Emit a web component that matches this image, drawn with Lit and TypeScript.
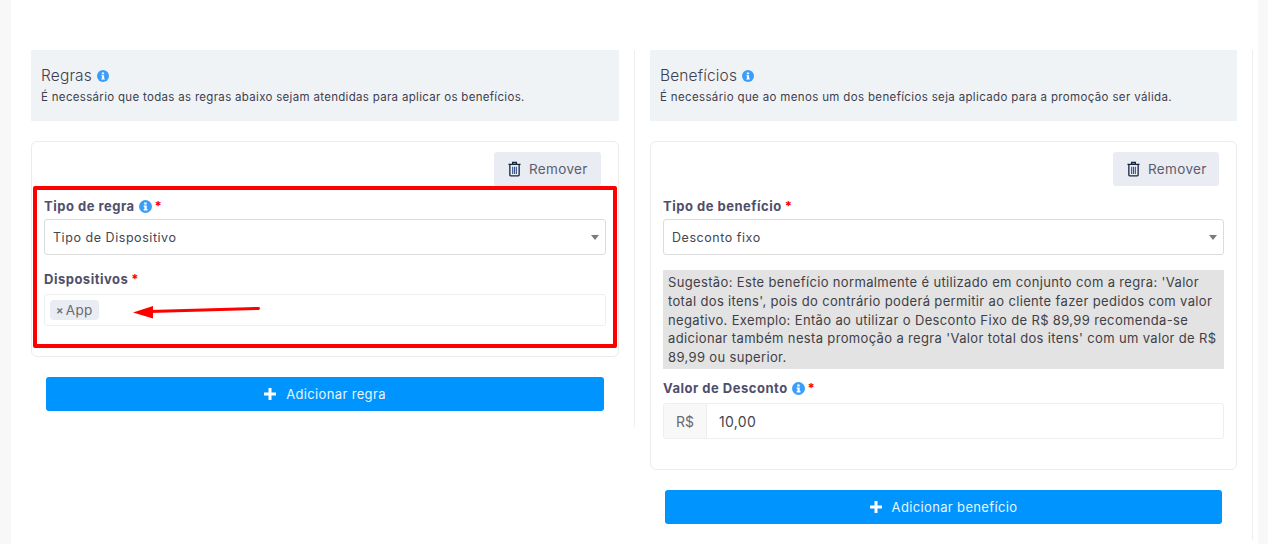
import { LitElement, html, css, svg } from 'lit';
import { customElement } from 'lit/decorators.js';

const infoIcon = html`<svg class="info" viewBox="0 0 14 14">
  <circle cx="7" cy="7" r="7" fill="#3b9dfa"></circle>
  <path d="M5.6 2.8h2.7v2.1H5.6zM5 6h3.3v3.8h.9V11.2H5V9.8h.9V7.4H5z" fill="#fff"></path>
</svg>`;

const trashIcon = html`<svg class="trash" viewBox="0 0 14 16">
  <path d="M.5 3h13M5 3V1h4V3" fill="none" stroke="#16233f" stroke-width="1.4"></path>
  <path d="M2 3.5v11c0 .5.3.8.8.8h8.4c.5 0 .8-.3.8-.8v-11" fill="none" stroke="#16233f" stroke-width="1.4"></path>
  <path d="M5 5.5v7.8M7 5.5v7.8M9 5.5v7.8" stroke="#35568a" stroke-width="1.2"></path>
</svg>`;

const plusIcon = html`<svg class="plus" viewBox="0 0 12 12">
  <path d="M4.5 0h3v4.5H12v3H7.5V12h-3V7.5H0v-3h4.5z" fill="#fff"></path>
</svg>`;

const arrow = svg`<path d="M258.5 308.5L150 311.5" stroke="#ff0000" stroke-width="3" stroke-linecap="round"></path>
  <path d="M133 312.5L153 306V318.5z" fill="#ff0000"></path>`;

@customElement('app-root')
export class AppRoot extends LitElement {
  static styles = css`
    :host {
      display: block;
      position: relative;
      width: 1268px;
      height: 544px;
      overflow: hidden;
      background: #f8f8f8;
      font-family: 'Inter', 'Liberation Sans', sans-serif;
      color: #3e3e4e;
    }

    .page {
      width: 1247px;
      height: 544px;
      margin-left: 11px;
      padding: 50px 5px 0;
      box-sizing: border-box;
      background: #fff;
      display: grid;
      grid-template-columns: 619px 618px;
      align-items: start;
    }

    .col {
      border-right: 1px solid #eeeeee;
      padding: 0 15px 16px;
    }

    .head {
      background: #f0f3f6;
      height: 71px;
      box-sizing: border-box;
      padding: 16px 10px 0;
      margin-bottom: 20px;
    }

    .title {
      display: flex;
      align-items: center;
      gap: 5px;
      font-size: 15.5px;
      line-height: 19px;
      font-weight: 300;
      letter-spacing: 0.15px;
    }

    .title .info { width: 12px; height: 12px; }

    .sub {
      font-size: 11.5px;
      line-height: 16px;
      margin-top: 4px;
      letter-spacing: 0.31px;
      white-space: nowrap;
    }

    .right .sub { letter-spacing: 0.35px; }

    .info { width: 13px; height: 13px; flex: none; }

    .card {
      border: 1px solid #ececec;
      border-radius: 6px;
      padding: 10px 12px 0;
      margin-bottom: 20px;
      box-sizing: border-box;
    }

    .left .card { height: 216px; }
    .right .card { height: 329px; }

    .tools { display: flex; justify-content: flex-end; margin-right: 5px; }

    .remove {
      display: flex;
      align-items: center;
      gap: 8px;
      width: 107px;
      height: 34px;
      box-sizing: border-box;
      padding-left: 14px;
      border: 0;
      border-radius: 3px;
      background: #e9ecf3;
      color: #5d5d6e;
      font: inherit;
      font-size: 13.5px;
      letter-spacing: 0.35px;
    }

    .right .remove { width: 106px; }

    .trash { width: 13px; height: 16px; flex: none; }

    .label {
      display: flex;
      align-items: center;
      gap: 4px;
      font-size: 13px;
      line-height: 16px;
      font-weight: 700;
      color: #4f4f6b;
      letter-spacing: 0.5px;
      margin-top: 12px;
      margin-bottom: 5px;
    }

    .label.next { margin-top: 16px; margin-bottom: 7px; }
    .label.value { margin-top: 11px; margin-bottom: 7px; }

    .req { color: #ff0000; margin-left: -1px; }

    .select {
      height: 36px;
      box-sizing: border-box;
      border: 1px solid #dcdcdc;
      border-radius: 3px;
      display: flex;
      align-items: center;
      justify-content: space-between;
      padding: 0 6px 0 8px;
      font-size: 12.5px;
      letter-spacing: 0.55px;
      color: #45454f;
    }

    .caret {
      width: 0;
      height: 0;
      border-left: 4.5px solid transparent;
      border-right: 4.5px solid transparent;
      border-top: 5px solid #7a7a7a;
      margin-top: 1px;
    }

    .multi {
      height: 32px;
      box-sizing: border-box;
      border: 1px solid #eeeeee;
      border-radius: 3px;
      display: flex;
      align-items: center;
      padding-left: 5px;
    }

    .chip {
      display: flex;
      align-items: center;
      gap: 2px;
      height: 20px;
      padding: 0 6px;
      border-radius: 4px;
      background: #e9ecf3;
      color: #6a6a72;
      font-size: 13.5px;
      letter-spacing: 0.3px;
    }

    .chip i { font-style: normal; font-size: 11px; font-weight: 700; color: #777; }

    .hint {
      margin-top: 15px;
      background: #e3e3e3;
      padding: 3px 5px;
      height: 99px;
      box-sizing: border-box;
      font-size: 13px;
      line-height: 18.8px;
      letter-spacing: 0.35px;
      white-space: nowrap;
      color: #3f3f46;
    }

    .money {
      height: 36px;
      box-sizing: border-box;
      border: 1px solid #eeeeee;
      border-radius: 3px;
      display: flex;
      align-items: stretch;
      font-size: 14px;
    }

    .money span {
      width: 42px;
      background: #f8f8f8;
      border-right: 1px solid #eeeeee;
      color: #6a6a72;
      display: flex;
      align-items: center;
      justify-content: center;
    }

    .money div { display: flex; align-items: center; padding-left: 12px; color: #45454f; letter-spacing: 0.3px; }

    .add {
      display: flex;
      align-items: center;
      justify-content: center;
      gap: 10px;
      width: calc(100% - 30px);
      height: 34px;
      margin: 0 15px;
      border: 0;
      border-radius: 3px;
      background: #0094ff;
      color: #e8f5ff;
      font: inherit;
      font-size: 13px;
      letter-spacing: 0.35px;
      box-sizing: border-box;
    }

    .plus { width: 12px; height: 12px; }

    .mark {
      position: absolute;
      left: 33px;
      top: 186px;
      width: 584px;
      height: 162px;
      box-sizing: border-box;
      border: 4px solid #ff0000;
      border-radius: 2px;
      pointer-events: none;
    }

    .arrow { position: absolute; inset: 0; width: 1268px; height: 544px; pointer-events: none; }
  `;

  render() {
    return html`
      <div class="page">
        <section class="col left">
          <div class="head">
            <div class="title">Regras ${infoIcon}</div>
            <div class="sub">É necessário que todas as regras abaixo sejam atendidas para aplicar os benefícios.</div>
          </div>
          <div class="card">
            <div class="tools"><button class="remove">${trashIcon} Remover</button></div>
            <div class="label">Tipo de regra ${infoIcon} <span class="req">*</span></div>
            <div class="select">Tipo de Dispositivo <span class="caret"></span></div>
            <div class="label next">Dispositivos <span class="req">*</span></div>
            <div class="multi"><div class="chip"><i>×</i>App</div></div>
          </div>
          <button class="add">${plusIcon} Adicionar regra</button>
        </section>
        <section class="col right">
          <div class="head">
            <div class="title">Benefícios ${infoIcon}</div>
            <div class="sub">É necessário que ao menos um dos benefícios seja aplicado para a promoção ser válida.</div>
          </div>
          <div class="card">
            <div class="tools"><button class="remove">${trashIcon} Remover</button></div>
            <div class="label">Tipo de benefício <span class="req">*</span></div>
            <div class="select">Desconto fixo <span class="caret"></span></div>
            <div class="hint">Sugestão: Este benefício normalmente é utilizado em conjunto com a regra: 'Valor<br />total dos itens', pois do contrário poderá permitir ao cliente fazer pedidos com valor<br />negativo. Exemplo: Então ao utilizar o Desconto Fixo de R$ 89,99 recomenda-se<br />adicionar também nesta promoção a regra 'Valor total dos itens' com um valor de R$<br />89,99 ou superior.</div>
            <div class="label value">Valor de Desconto ${infoIcon} <span class="req">*</span></div>
            <div class="money"><span>R$</span><div>10,00</div></div>
          </div>
          <button class="add">${plusIcon} Adicionar benefício</button>
        </section>
      </div>
      <div class="mark"></div>
      <svg class="arrow" viewBox="0 0 1268 544">${arrow}</svg>
    `;
  }
}
